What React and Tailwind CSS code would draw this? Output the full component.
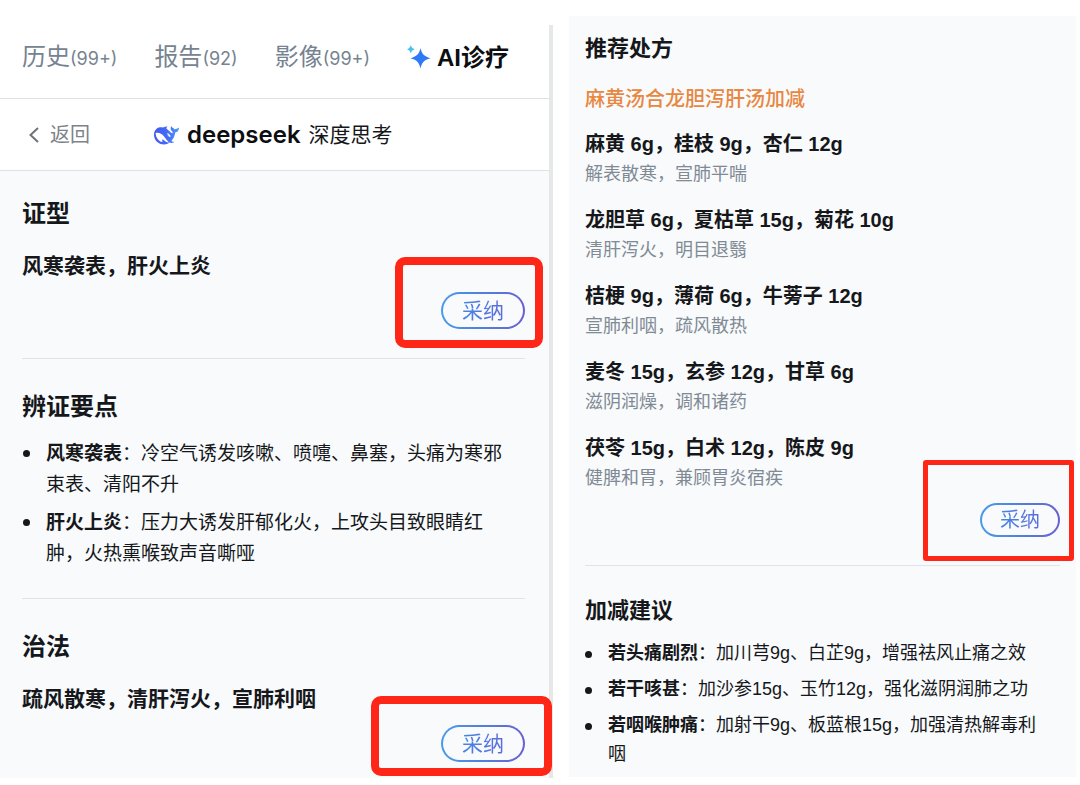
const tabs = [
  { label: "历史", count: "(99+)" },
  { label: "报告", count: "(92)" },
  { label: "影像", count: "(99+)" },
];

const keyPoints = [
  { term: "风寒袭表", text: "冷空气诱发咳嗽、喷嚏、鼻塞，头痛为寒邪束表、清阳不升" },
  { term: "肝火上炎", text: "压力大诱发肝郁化火，上攻头目致眼睛红肿，火热熏喉致声音嘶哑" },
];

const prescriptions = [
  { herbs: "麻黄 6g，桂枝 9g，杏仁 12g", effect: "解表散寒，宣肺平喘" },
  { herbs: "龙胆草 6g，夏枯草 15g，菊花 10g", effect: "清肝泻火，明目退翳" },
  { herbs: "桔梗 9g，薄荷 6g，牛蒡子 12g", effect: "宣肺利咽，疏风散热" },
  { herbs: "麦冬 15g，玄参 12g，甘草 6g", effect: "滋阴润燥，调和诸药" },
  { herbs: "茯苓 15g，白术 12g，陈皮 9g", effect: "健脾和胃，兼顾胃炎宿疾" },
];

const adjustments = [
  { term: "若头痛剧烈", text: "加川芎9g、白芷9g，增强祛风止痛之效" },
  { term: "若干咳甚", text: "加沙参15g、玉竹12g，强化滋阴润肺之功" },
  { term: "若咽喉肿痛", text: "加射干9g、板蓝根15g，加强清热解毒利咽" },
];

function SparkleIcon() {
  return (
    <svg width="24" height="26" viewBox="0 2 24 26" aria-hidden="true">
      <path d="M13.500 5c1 5.200 3.300 8.500 10 10.200-6.700 1.700-9 5-10 10.300-1-5.300-3.300-8.600-10-10.300 6.700-1.700 9-5 10-10.200z" fill="#2f78f6" />
      <path d="M3.800 2c.7 2.400 1.500 3.400 4 4.200-2.500.8-3.300 1.800-4 4.200C3.100 8 2.300 7 0 6.200 2.300 5.400 3.100 4.400 3.800 2z" fill="#45c2ee" />
    </svg>
  );
}

function WhaleIcon() {
  return (
    <svg width="25" height="25" viewBox="0 0 24 24" fill="url(#whale)" aria-hidden="true">
      <defs>
        <linearGradient id="whale" x1="0" y1="0" x2="1" y2="0">
          <stop offset="0" stopColor="#4358ee" />
          <stop offset="0.550" stopColor="#456bf8" />
          <stop offset="1" stopColor="#4b9bf7" />
        </linearGradient>
      </defs>
      <path d="M23.748 4.482c-.254-.124-.364.113-.512.234-.051.039-.094.09-.137.136-.372.397-.806.657-1.373.626-.829-.046-1.537.214-2.163.848-.133-.782-.575-1.248-1.247-1.548-.352-.156-.708-.311-.955-.65-.172-.241-.219-.51-.305-.774-.055-.16-.11-.323-.293-.35-.2-.031-.278.136-.356.276-.313.572-.434 1.202-.422 1.84.027 1.436.633 2.58 1.838 3.393.137.093.172.187.129.323-.082.28-.18.552-.266.833-.055.179-.137.217-.329.14a5.526 5.526 0 01-1.736-1.18c-.857-.828-1.631-1.742-2.597-2.458a11.365 11.365 0 00-.689-.471c-.985-.957.13-1.743.388-1.836.27-.098.093-.432-.779-.428-.872.004-1.67.295-2.687.684a3.055 3.055 0 01-.465.137 9.597 9.597 0 00-2.883-.102c-1.885.21-3.39 1.102-4.497 2.623C.082 8.606-.231 10.684.152 12.85c.403 2.284 1.569 4.175 3.36 5.653 1.858 1.533 3.997 2.284 6.438 2.14 1.482-.085 3.133-.284 4.994-1.86.47.234.962.327 1.78.397.63.059 1.236-.03 1.705-.128.735-.156.684-.837.419-.961-2.155-1.004-1.682-.595-2.113-.926 1.096-1.296 2.746-2.642 3.392-7.003.05-.347.007-.565 0-.845-.004-.17.035-.237.23-.256a4.173 4.173 0 001.545-.475c1.396-.763 1.96-2.015 2.093-3.517.02-.23-.004-.467-.247-.588zM11.581 18c-2.089-1.642-3.102-2.183-3.52-2.16-.392.024-.321.471-.235.763.09.288.207.486.371.739.114.167.192.416-.113.603-.673.416-1.842-.14-1.897-.167-1.361-.802-2.5-1.86-3.301-3.307-.774-1.393-1.224-2.887-1.298-4.482-.02-.386.093-.522.477-.592a4.696 4.696 0 011.529-.039c2.132.312 3.946 1.265 5.468 2.774.868.86 1.525 1.887 2.202 2.891.72 1.066 1.494 2.082 2.48 2.914.348.292.625.514.891.677-.802.09-2.14.11-3.054-.614zm1-6.44a.306.306 0 01.415-.287.302.302 0 01.2.288.306.306 0 01-.31.307.303.303 0 01-.304-.308zm3.11 1.596c-.2.081-.399.151-.59.16a1.245 1.245 0 01-.798-.254c-.274-.23-.47-.358-.552-.758a1.73 1.73 0 01.016-.588c.07-.327-.008-.537-.239-.727-.187-.156-.426-.199-.688-.199a.559.559 0 01-.254-.078c-.11-.054-.2-.19-.114-.358.028-.054.16-.186.192-.21.356-.202.767-.136 1.146.016.352.144.618.408 1.001.782.391.451.462.576.685.914.176.265.336.537.445.848.067.195-.019.354-.25.452z" />
    </svg>
  );
}

// Accept button with the red frame that calls attention to it.
function Accept({ size, frame }) {
  return (
    <div className="flex justify-end">
      <div className="relative">
        <button
          type="button"
          className={`flex rounded-full bg-linear-to-r from-[#4a9bea] via-[#4f80dc] to-[#6a5fd0] p-[2px] ${size}`}
        >
          <span className="flex h-full w-full items-center justify-center rounded-full bg-[#f8fafc]">
            <span className="bg-linear-to-r from-[#4584e4] to-[#5b6bdc] bg-clip-text text-transparent">采纳</span>
          </span>
        </button>
        <div className={`pointer-events-none absolute border-[#fe2617] ${frame}`} />
      </div>
    </div>
  );
}

function BulletItem({ term, children }) {
  return (
    <li className="flex gap-4 before:mt-3 before:size-[7px] before:shrink-0 before:rounded-full before:bg-[#15171a] before:content-['']">
      <p>
        <strong className="font-bold">{term}</strong>：{children}
      </p>
    </li>
  );
}

export default function App() {
  return (
    <main className="grid grid-cols-[553fr_507fr] items-start gap-4 bg-white pr-1 font-['Liberation_Sans','Noto_Sans_CJK_SC',sans-serif] text-[#15171a]">
      <section className="mt-[25px] border-r-4 border-[#e6e7e8]">
        <nav className="flex items-center gap-[37px] border-b border-[#dfe1e3] pt-4 pr-4 pb-[23px] pl-[22px] whitespace-nowrap">
          {tabs.map((tab) => (
            <button key={tab.label} type="button" className="flex items-baseline text-2xl leading-8 text-[#768391]">
              {tab.label}
              <span className="font-['Inter',sans-serif] text-lg leading-8">{tab.count}</span>
            </button>
          ))}
          <button type="button" className="flex items-center gap-1.5 text-2xl leading-8 font-bold text-[#0c0e11]">
            <SparkleIcon />
            AI诊疗
          </button>
        </nav>

        <div className="flex items-center gap-16 border-b border-[#dfe1e3] pt-5 pb-[19px] pl-7 whitespace-nowrap">
          <button type="button" className="flex items-center gap-2.5 text-xl leading-8 text-[#7d8388]">
            <svg width="12" height="18" viewBox="0 0 12 18" fill="none" stroke="#6f7479" strokeWidth="2" aria-hidden="true">
              <path d="M10 2 2.500 9l7.500 7" />
            </svg>
            返回
          </button>
          <h1 className="flex items-center gap-2 text-[21px] leading-8 font-normal">
            <WhaleIcon />
            <span className="font-['Inter',sans-serif] text-2xl leading-8 font-semibold text-[#0c0e11]">deepseek</span>
            深度思考
          </h1>
        </div>

        <div className="bg-[#f8fafc] pt-[27px] pr-6 pb-4 pl-[22px]">
          <h2 className="text-2xl leading-8 font-bold">证型</h2>
          <p className="mt-5 mb-2.5 text-[21px] leading-8 font-bold">风寒袭表，肝火上炎</p>
          <Accept size="h-[37px] w-[84px] text-[21px]" frame="-top-[35px] -right-[18px] -bottom-[19px] -left-[46px] rounded-[10px] border-8" />

          <hr className="mt-[29px] mb-8 border-[#e0e4e8]" />

          <h2 className="text-2xl leading-8 font-bold">辨证要点</h2>
          <ul className="mt-[15px] flex flex-col gap-[7px] pr-3 pl-px text-[19px] leading-[31px]">
            {keyPoints.map((point) => (
              <BulletItem key={point.term} term={point.term}>
                {point.text}
              </BulletItem>
            ))}
          </ul>

          <hr className="mt-[29px] mb-8 border-[#e0e4e8]" />

          <h2 className="text-2xl leading-8 font-bold">治法</h2>
          <p className="mt-5 mb-2.5 text-[21px] leading-8 font-bold">疏风散寒，清肝泻火，宣肺利咽</p>
          <Accept size="h-[37px] w-[84px] text-[21px]" frame="-top-[29px] -right-[27px] -bottom-[14px] -left-[70px] rounded-[10px] border-8" />
        </div>
      </section>

      <section className="mt-4 bg-[#f8fafc] px-4 pt-[17px] pb-2">
        <h2 className="text-[22px] leading-8 font-bold">推荐处方</h2>
        <p className="mt-5 text-xl leading-7 font-medium text-[#e8873f]">麻黄汤合龙胆泻肝汤加减</p>
        <div className="mt-4 mb-2.5 flex flex-col gap-4">
          {prescriptions.map((item) => (
            <div key={item.herbs}>
              <p className="text-xl leading-[30px] font-bold">{item.herbs}</p>
              <p className="text-lg leading-[30px] text-[#808a94]">{item.effect}</p>
            </div>
          ))}
        </div>
        <Accept size="h-[34px] w-20 text-xl" frame="-top-[43px] -right-[14px] -bottom-6 -left-[57px] rounded-[3px] border-[5px]" />

        <hr className="mt-7 mb-[29px] border-[#e0e4e8]" />

        <h2 className="text-[22px] leading-8 font-bold">加减建议</h2>
        <ul className="mt-3 flex flex-col gap-[7px] pr-2 text-lg leading-[29px]">
          {adjustments.map((item) => (
            <BulletItem key={item.term} term={item.term}>
              {item.text}
            </BulletItem>
          ))}
        </ul>
      </section>
    </main>
  );
}
